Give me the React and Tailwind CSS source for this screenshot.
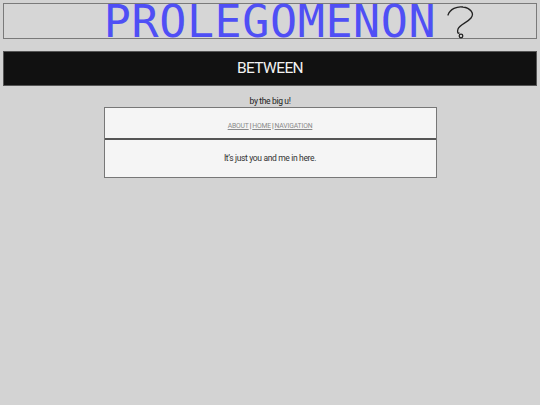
import React from "react";

export default function App() {
  return (
    <div className="min-h-[405px] w-full bg-[#d3d3d3] pt-[3px]" style={{ fontFamily: "Roboto, 'Open Sans', sans-serif" }}>
      <header className="relative mx-[3px] h-[36px] border border-[#7a7a7a] bg-[#d6d6d6] flex justify-center items-start">
        <div className="relative h-[34px]">
          <span
            className="block text-[45px] leading-[38px] tracking-[0.6px] text-[#4f4ff5] -mt-[1px]"
            style={{ fontFamily: "'DejaVu Sans Mono', monospace" }}
          >
            PROLEGOMENON
          </span>
          <svg
            className="absolute left-[342px] top-[1px]"
            width="30"
            height="34"
            viewBox="0 0 30 34"
            fill="none"
            stroke="#222"
            strokeWidth="1.3"
            strokeLinecap="round"
          >
            <path d="M2 10 C4 4, 11 1, 17 2 C24 3, 29 8, 25 13 C21 18, 14 19, 12 24 C11 27, 12 29, 13 28" />
            <circle cx="15" cy="31" r="1.8" />
          </svg>
        </div>
      </header>
      <div className="mx-[3px] mt-[12px] h-[35px] bg-[#111111] border border-[#555] flex items-center justify-center">
        <span className="text-[15.5px] text-[#f2f2f2] tracking-[-0.04em]">BETWEEN</span>
      </div>
      <div className="text-center text-[8.5px] tracking-[-0.35px] text-[#222] mt-[10px] leading-[10px]">by the big u!</div>
      <div className="mx-auto mt-[1px] w-[333px] border border-[#777] bg-[#f5f5f5]">
        <div className="h-[30px] flex items-end justify-center pb-[7px] text-[6.8px] tracking-[-0.15px] text-[#8a8a8a]">
          <a className="underline">ABOUT</a>
          <span className="mx-[1px] text-[#666] font-bold">|</span>
          <a className="underline">HOME</a>
          <span className="mx-[1px] text-[#666] font-bold">|</span>
          <a className="underline">NAVIGATION</a>
        </div>
        <div className="h-[2px] bg-[#555]"></div>
        <div className="h-[37px] flex items-center justify-center pb-[1px] text-[8.5px] tracking-[-0.35px] text-[#333]">
          It’s just you and me in here.
        </div>
      </div>
    </div>
  );
}
